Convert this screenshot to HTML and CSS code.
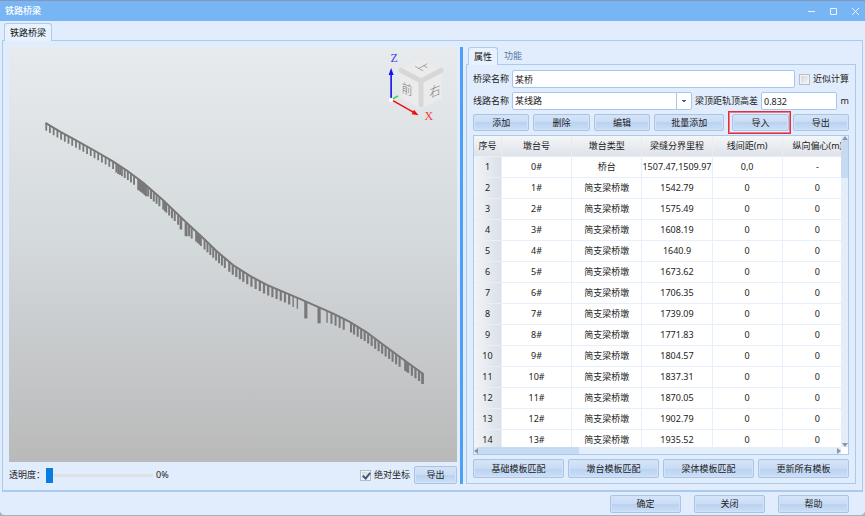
FILE: index.html
```html
<!DOCTYPE html>
<html lang="zh-CN">
<head>
<meta charset="utf-8">
<title>铁路桥梁</title>
<link rel="stylesheet" href="styles.css">
</head>
<body>
<div class="window">
  <header class="titlebar">
    <h1 class="title">铁路桥梁</h1>
    <div class="window-controls">
      <button class="wc" aria-label="最小化"><svg viewBox="0 0 9 9"><path d="M1 4.500h7"/></svg></button>
      <button class="wc" aria-label="最大化"><svg viewBox="0 0 9 9"><path d="M1.500 1.500h6v6h-6z"/></svg></button>
      <button class="wc" aria-label="关闭窗口"><svg viewBox="0 0 9 9"><path d="M1 1l7 7M8 1l-7 7"/></svg></button>
    </div>
  </header>

  <nav class="tabs tabs-outer"><button class="tab active">铁路桥梁</button></nav>
  <main class="workspace">
    <section class="view-pane">
      <div class="viewport">
        <svg class="scene" viewBox="9 46 448 416" role="img" aria-label="桥梁三维视图">
          <path class="deck" d="M45 122L60 131L73 138L97 151.5L113 161L127 170L143 182L163 199.500L183 219L203 237.500L217 251L233 264.500L250 275.500L267 284.500L300 298.500L317 306L333 313L350 321.500L367 332L383 344L400 356.500L424 374"/>
          <g id="piers"></g>
          <g class="cube">
            <path class="face" d="M421 57L442 69L442 97L421 108L401 97L400 69Z"/>
            <path class="edge" d="M401.500 69.500L421.500 80L441.500 69.500M421.500 80V104.500"/>
            <text class="cube-label" transform="matrix(.85 .3 0 1 402 91)">前</text>
            <text class="cube-label" transform="matrix(.85 -.35 0 1 430 97)">右</text>
            <text class="cube-label" transform="matrix(.7 .4 -.8 .45 415 65)">上</text>
          </g>
          <path class="axis-z" d="M391.500 98V72"/><path class="tip-z" d="M389 74L391.500 67L394 74Z"/>
          <path class="axis-y" d="M393 98L398.500 95"/>
          <path class="axis-x" d="M392 99L415 112"/><path class="tip-x" d="M419 114.500L412 113.500L414.500 109Z"/>
          <circle cx="391.500" cy="99" r="2.200" fill="#fff"/>
          <text class="axis-label z" x="391" y="61">Z</text>
          <text class="axis-label x" x="425" y="119">X</text>
        </svg>
      </div>
      <div class="view-bar">
        <label for="opacity">透明度：</label>
        <input id="opacity" class="slider" type="range" min="0" max="100" value="0">
        <output for="opacity">0%</output>
        <label class="check push"><input type="checkbox" checked>绝对坐标</label>
        <button class="btn btn-small">导出</button>
      </div>
    </section>

    <div class="splitter"></div>

    <section class="props-pane">
      <nav class="tabs"><button class="tab active">属性</button><button class="tab">功能</button></nav>
      <div class="props">
        <div class="field-row">
          <label for="bridge">桥梁名称</label>
          <input id="bridge" class="field grow" type="text" value="某桥">
          <label class="check"><input type="checkbox">近似计算</label>
        </div>
        <div class="field-row">
          <label for="line">线路名称</label>
          <span class="combo"><select id="line" class="field"><option>某线路</option></select></span>
          <label for="diff">梁顶距轨顶高差</label>
          <input id="diff" class="field field-num" type="text" value="0.832">
          <span class="unit">m</span>
        </div>
        <div class="toolbar">
          <button class="btn">添加</button>
          <button class="btn">删除</button>
          <button class="btn">编辑</button>
          <button class="btn wide">批量添加</button>
          <button class="btn marked">导入</button>
          <button class="btn">导出</button>
        </div>
        <div class="table-box">
          <div class="table-clip">
            <table>
              <colgroup><col class="c-index"><col class="c"><col class="c"><col class="c"><col class="c"><col class="c"></colgroup>
              <thead><tr><th>序号</th><th>墩台号</th><th>墩台类型</th><th>梁缝分界里程</th><th>线间距(m)</th><th>纵向偏心(m)</th></tr></thead>
              <tbody>
                <tr><th>1</th><td>0#</td><td>桥台</td><td>1507.47,1509.97</td><td>0,0</td><td>-</td></tr>
                <tr><th>2</th><td>1#</td><td>简支梁桥墩</td><td>1542.79</td><td>0</td><td>0</td></tr>
                <tr><th>3</th><td>2#</td><td>简支梁桥墩</td><td>1575.49</td><td>0</td><td>0</td></tr>
                <tr><th>4</th><td>3#</td><td>简支梁桥墩</td><td>1608.19</td><td>0</td><td>0</td></tr>
                <tr><th>5</th><td>4#</td><td>简支梁桥墩</td><td>1640.9</td><td>0</td><td>0</td></tr>
                <tr><th>6</th><td>5#</td><td>简支梁桥墩</td><td>1673.62</td><td>0</td><td>0</td></tr>
                <tr><th>7</th><td>6#</td><td>简支梁桥墩</td><td>1706.35</td><td>0</td><td>0</td></tr>
                <tr><th>8</th><td>7#</td><td>简支梁桥墩</td><td>1739.09</td><td>0</td><td>0</td></tr>
                <tr><th>9</th><td>8#</td><td>简支梁桥墩</td><td>1771.83</td><td>0</td><td>0</td></tr>
                <tr><th>10</th><td>9#</td><td>简支梁桥墩</td><td>1804.57</td><td>0</td><td>0</td></tr>
                <tr><th>11</th><td>10#</td><td>简支梁桥墩</td><td>1837.31</td><td>0</td><td>0</td></tr>
                <tr><th>12</th><td>11#</td><td>简支梁桥墩</td><td>1870.05</td><td>0</td><td>0</td></tr>
                <tr><th>13</th><td>12#</td><td>简支梁桥墩</td><td>1902.79</td><td>0</td><td>0</td></tr>
                <tr><th>14</th><td>13#</td><td>简支梁桥墩</td><td>1935.52</td><td>0</td><td>0</td></tr>
              </tbody>
            </table>
          </div>
          <div class="vscroll"><i class="arrow up"></i><i class="thumb"></i><i class="arrow down"></i></div>
          <div class="hscroll"><i class="arrow left"></i><i class="thumb"></i><i class="arrow right"></i></div>
        </div>
        <div class="templates">
          <button class="btn">基础模板匹配</button>
          <button class="btn">墩台模板匹配</button>
          <button class="btn">梁体模板匹配</button>
          <button class="btn">更新所有模板</button>
        </div>
      </div>
    </section>
  </main>

  <footer class="footer">
    <button class="btn">确定</button>
    <button class="btn">关闭</button>
    <button class="btn">帮助</button>
  </footer>
</div>
<script src="scene.js"></script>
</body>
</html>
```
FILE: scene.js
```js
// Deck centre line, sampled as [x, y].
const deck = [[45,122],[60,131],[73,138],[97,151.5],[113,161],[127,170],[143,182],[163,199.5],[183,219],[203,237.5],[217,251],[233,264.5],[250,275.5],[267,284.5],[300,298.5],[317,306],[333,313],[350,321.5],[367,332],[383,344],[400,356.5],[424,374]];

function deckY(x) {
  for (let i = 1; i < deck.length; i++) {
    const [x0, y0] = deck[i - 1], [x1, y1] = deck[i];
    if (x <= x1) return y0 + (y1 - y0) * (x - x0) / (x1 - x0);
  }
  return deck[deck.length - 1][1];
}

// Runs of piers: [first x, last x, spacing, height, width].
const runs = [
  [45.8,112.8,3.72,7.5,1.8],[116,122,1.9,9,1.8],[124.5,135,3.1,9,1.9],
  [138,146,1.3,11,2],[148,161,2.8,9.5,2],[163,167,1.6,9.5,1.8],[169,176,2.8,9.5,2],
  [178,178,1,10,2],[180.8,180.8,1,12,2.6],[186,186,1,14,3],[189,194,2.6,11,2],
  [196,202,1.6,10,1.9],[204.5,226,2.9,10,2],[229.3,244,3.5,10,2.2],[247.3,291,4.2,10,2.2],
  [293.3,297.7,4.2,11,1.4],[306,306,1,17,3.2],[319.3,319.3,1,16,3.2],[327.3,327.3,1,12,1.4],
  [331.7,348,4.1,11,2],[351.3,354.3,3,10,2.1],[358,403,3.5,10,2.1],[405.5,410,1.6,10,1.9],
  [412.3,420,3.6,10,2.2],[423,423,1,10.5,2.8]
];

const group = document.getElementById('piers');
for (const [from, to, step, height, width] of runs) {
  let d = '';
  for (let x = from; x <= to + 0.01; x += step) d += `M${x.toFixed(1)} ${deckY(x).toFixed(1)}v${height}`;
  const path = document.createElementNS('http://www.w3.org/2000/svg', 'path');
  path.setAttribute('d', d);
  path.setAttribute('stroke-width', width);
  group.appendChild(path);
}
```
FILE: styles.css
```css
* { box-sizing: border-box; }

body {
  margin: 0;
  background: #a9afbd;
  color: #222;
  font: 9px/12px "Noto Sans", "Noto Sans CJK SC", sans-serif;
}

button, input, select {
  margin: 0;
  padding: 0;
  border: 0;
  background: none;
  color: inherit;
  font: inherit;
}

.window {
  display: flex;
  flex-direction: column;
  height: 100vh;
  border-top: 1px solid #8796b8;
  border-bottom: 1px solid #a9afbd;
  border-radius: 0 0 5px 5px;
  background: #e1edfc;
  overflow: hidden;
}

.titlebar {
  display: flex;
  flex: none;
  align-items: center;
  justify-content: space-between;
  height: 20px;
  padding: 0 5px;
  background: #78b5f4;
}
.title { margin: 0; color: #fff; font-size: 9px; font-weight: 500; }
.window-controls { display: flex; gap: 13px; }
.wc { width: 9px; height: 9px; }
.wc svg { display: block; fill: none; stroke: #e9f4ff; stroke-width: 1; }

.tabs { display: flex; flex: none; padding-left: 2px; }
.tabs-outer { padding: 2px 0 0 4px; }
.tab {
  position: relative;
  height: 17px;
  padding: 0 5px;
  border: 1px solid transparent;
  color: #5478a6;
}
.tab.active {
  z-index: 1;
  height: 18px;
  margin-bottom: -1px;
  border-color: #abcaf0;
  border-bottom: 0;
  border-radius: 3px 3px 0 0;
  background: #e8f2fe;
  color: #111;
}

.workspace {
  display: grid;
  flex: 1;
  grid-template-columns: minmax(0, 448fr) 3px minmax(0, 390fr);
  column-gap: 3px;
  min-height: 0;
  margin: 0 2px;
  padding: 6px;
  border: 1px solid #abcaf0;
  border-bottom-width: 2px;
}

.view-pane, .props-pane { display: flex; flex-direction: column; min-height: 0; }
.viewport { flex: 1; min-height: 0; background: linear-gradient(#e7ebed, #d4d9dc 47%, #b9b9b9); }
.scene { display: block; width: 100%; height: 100%; }
.deck { fill: none; stroke: #777; stroke-width: 2; }
#piers { stroke: #797979; }
.face { fill: #ebebeb; }
.edge { fill: none; stroke: #d7d7d7; stroke-width: 5; stroke-linecap: round; }
.cube-label { fill: #777; font: 13px "Noto Sans CJK SC", sans-serif; font-weight: 300; }
.axis-x, .axis-z { fill: none; stroke-width: 1.6; }
.axis-x { stroke: #f01010; }
.axis-y { stroke: #20e040; stroke-width: 1.6; }
.axis-z { stroke: #1010f0; }
.tip-x { fill: #f01010; }
.tip-z { fill: #1010f0; }
.axis-label { font: 12px "Liberation Serif", serif; }
.axis-label.x { fill: #f04040; }
.axis-label.z { fill: #4040f0; }

.view-bar { display: flex; align-items: center; height: 22px; padding-top: 4px; }
.slider { width: 107px; height: 16px; margin: 0 3px 0 1px; appearance: none; }
.slider::-webkit-slider-runnable-track { height: 3px; background: #dfe2e5; }
.slider::-webkit-slider-thumb {
  width: 7px;
  height: 15px;
  margin-top: -6px;
  appearance: none;
  background: #087ce0;
}
.push { margin-left: auto; }

.check { display: flex; align-items: center; gap: 3px; }
.check input {
  width: 11px;
  height: 11px;
  border: 1px solid #b4bdc8;
  appearance: none;
  background: linear-gradient(135deg, #cfd4da, #f6f7f8);
  box-shadow: inset 0 0 0 1px #f1f3f6;
}
.check input:checked::after {
  content: "";
  display: block;
  width: 3px;
  height: 6px;
  margin: 0 0 0 3px;
  border: solid #41587f;
  border-width: 0 2px 2px 0;
  transform: rotate(40deg);
}

.btn {
  height: 17px;
  border: 1px solid #a9c4e6;
  border-radius: 2px;
  background: linear-gradient(#d5e5f9, #c9dcf5 50%, #bad2f0 50%, #cadef7);
  box-shadow: inset 0 0 0 1px #d2e3f8;
  line-height: 14px;
}
.btn-small { width: 43px; height: 18px; margin-left: 4px; }

.splitter { background: #4fa0f5; }

.props {
  display: flex;
  flex: 1;
  flex-direction: column;
  gap: 4px;
  min-height: 0;
  padding: 5px 6px;
  border: 1px solid #abcaf0;
}
.field-row { display: flex; align-items: center; gap: 3px; height: 18px; }
.field {
  width: 100%;
  height: 18px;
  padding: 0 2px;
  border: 1px solid #a5c7ef;
  border-radius: 2px;
  background: #fff;
}
.field.grow { flex: 1; width: auto; min-width: 0; margin-right: 1px; }
.combo { position: relative; flex: 1; }
.combo .field { display: block; appearance: none; }
.combo::after {
  content: "";
  position: absolute;
  top: 1px;
  right: 1px;
  bottom: 1px;
  width: 14px;
  border-left: 1px solid #a5c7ef;
  background: linear-gradient(#44618e, #44618e) 5px 7px / 4px 1px no-repeat,
    linear-gradient(#44618e, #44618e) 6px 8px / 2px 1px no-repeat;
  pointer-events: none;
}
.field-num { flex: none; width: 76px; }
.unit { width: 9px; text-align: right; }

.toolbar { display: flex; gap: 4px; }
.toolbar .btn { flex: 4 1 0; }
.toolbar .wide { flex-grow: 5; }
.marked { position: relative; margin-left: 4px; }
.marked::after {
  content: "";
  position: absolute;
  inset: -4px -3px -4px -5px;
  border: 1px solid #e02f3b;
  outline: 1px solid #ec7d88;
  outline-offset: -2px;
}

.table-box {
  display: grid;
  flex: 1;
  grid-template: minmax(0, 1fr) 7px / minmax(0, 1fr) 7px;
  min-height: 0;
  border: 1px solid #a9c9f0;
  background: #fff;
}
.table-clip { min-height: 0; overflow: hidden; }
table { width: 379px; border-collapse: separate; border-spacing: 0; table-layout: fixed; }
.c-index { width: 28px; }
th, td {
  height: 21px;
  padding: 0;
  border-right: 1px solid #e6effb;
  border-bottom: 1px solid #e6effb;
  font-weight: 400;
  text-align: center;
  white-space: nowrap;
}
thead th { border-right-color: #e9edf2; background: linear-gradient(#f4f6f8, #dee3ea); }
tbody th { background: linear-gradient(90deg, #f2f4f6, #dbe1e9); }

.vscroll, .hscroll { display: flex; align-items: center; justify-content: space-between; background: #e4eefb; }
.vscroll { flex-direction: column; }
.vscroll .thumb { width: 7px; height: 38px; margin-bottom: auto; background: #c6daf2; }
.hscroll .thumb { width: 101px; height: 7px; margin-right: auto; background: #c6daf2; }
.arrow { border: 3px solid transparent; }
.arrow.up { border-top: 0; border-bottom: 4px solid #8c96a3; }
.arrow.down { border-bottom: 0; border-top: 4px solid #8c96a3; }
.arrow.left { border-left: 0; border-right: 4px solid #8c96a3; }
.arrow.right { border-right: 0; border-left: 4px solid #8c96a3; }

.templates { display: grid; grid-template-columns: repeat(4, 1fr); gap: 4px; }
.templates .btn { height: 19px; }

.footer { display: flex; flex: none; justify-content: flex-end; gap: 13px; padding: 3px 16px 2px; }
.footer .btn { width: 71px; height: 18px; }
```
